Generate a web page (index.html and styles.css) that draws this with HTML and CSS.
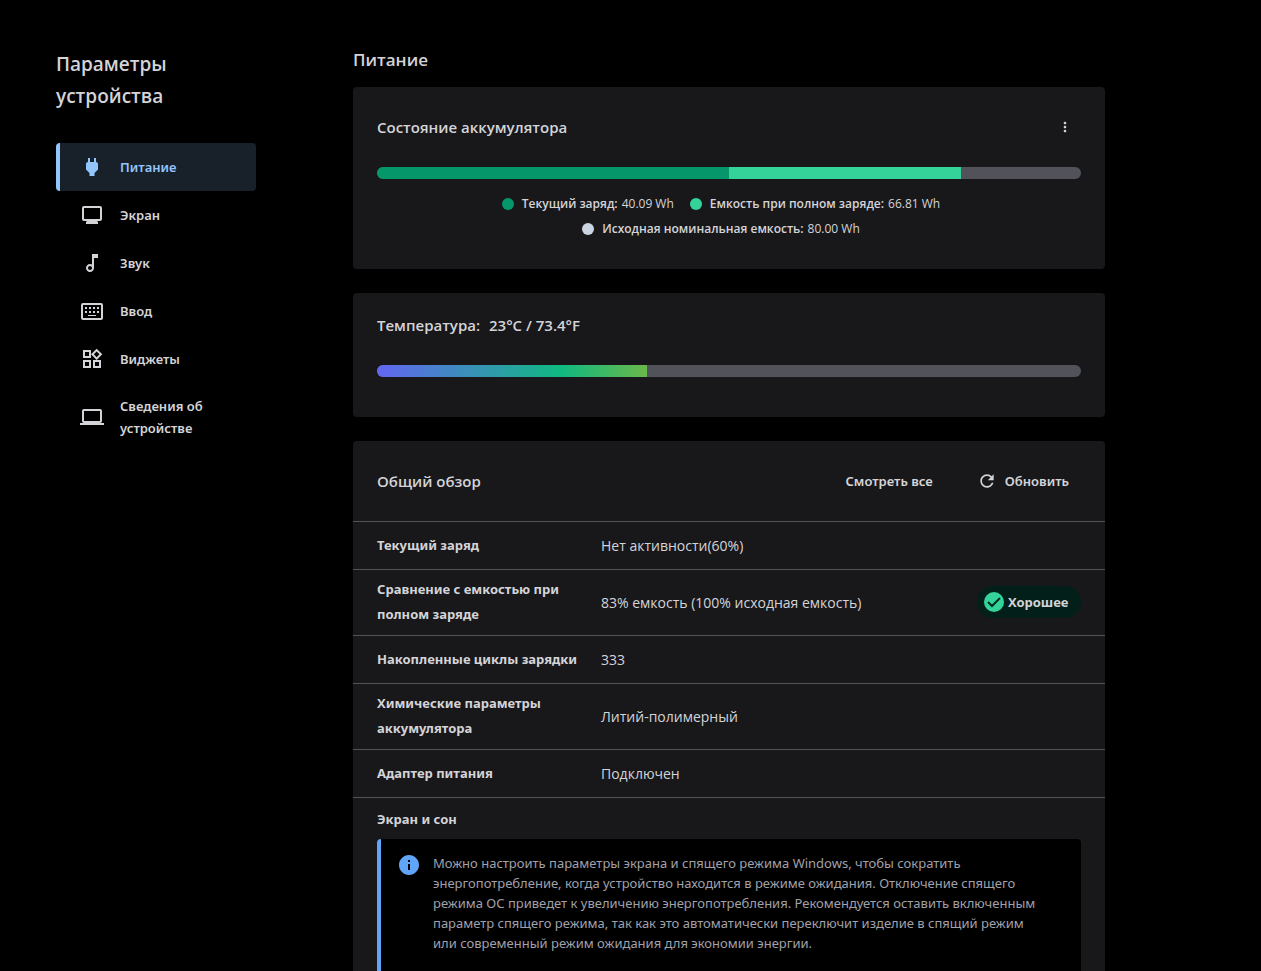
FILE: index.html
```html
<!DOCTYPE html>
<html lang="ru">
<head>
  <meta charset="UTF-8" />
  <meta name="viewport" content="width=device-width, initial-scale=1.0" />
  <title>Параметры устройства</title>
  <link rel="stylesheet" href="styles.css">
</head>
<body>
  <aside class="sidebar">
    <h1 class="sidebar-title">Параметры устройства</h1>
    <nav class="nav">
      <a class="nav-item active" href="#power">
        <svg class="icon" viewBox="0 0 24 24"><path d="M16.01 7L16 3h-2v4h-4V3H8v4h-.01C7 6.99 6 7.99 6 8.99v5.49L9.5 18v3h5v-3l3.5-3.51v-5.5c0-1-1-2-1.99-1.99z"/></svg>
        <span>Питание</span>
      </a>
      <a class="nav-item" href="#display">
        <svg class="icon" viewBox="0 0 24 24"><path d="M20 3H4c-1.1 0-2 .9-2 2v11c0 1.1.9 2 2 2h3l-1 1v2h12v-2l-1-1h3c1.1 0 2-.9 2-2V5c0-1.1-.9-2-2-2zm0 13H4V5h16v11z"/></svg>
        <span>Экран</span>
      </a>
      <a class="nav-item" href="#sound">
        <svg class="icon" viewBox="0 0 24 24"><path d="M12 3l.01 10.55c-.59-.34-1.27-.55-2-.55C7.79 13 6 14.79 6 17s1.79 4 4.01 4S14 19.21 14 17V7h4V3h-6zm-1.99 16c-1.1 0-2-.9-2-2s.9-2 2-2 2 .9 2 2-.9 2-2 2z"/></svg>
        <span>Звук</span>
      </a>
      <a class="nav-item" href="#input">
        <svg class="icon" viewBox="0 0 24 24"><path fill-rule="evenodd" d="M3 4h18a2 2 0 0 1 2 2v13a2 2 0 0 1-2 2H3a2 2 0 0 1-2-2V6a2 2 0 0 1 2-2zm0 2v13h18V6zM5 8h2v2H5zM9 8h2v2H9zM13 8h2v2h-2zM17 8h2v2h-2zM5 12h2v2H5zM9 12h2v2H9zM13 12h2v2h-2zM17 12h2v2h-2zM8 16h8v1H8z"/></svg>
        <span>Ввод</span>
      </a>
      <a class="nav-item" href="#widgets">
        <svg class="icon" viewBox="0 0 24 24"><path d="M16.66 4.52l2.83 2.83-2.83 2.83-2.83-2.83 2.83-2.83M9 5v4H5V5h4m10 10v4h-4v-4h4M9 15v4H5v-4h4m7.66-13.31L11 7.34 16.66 13l5.66-5.66-5.66-5.65zM11 3H3v8h8V3zm10 10h-8v8h8v-8zm-10 0H3v8h8v-8z"/></svg>
        <span>Виджеты</span>
      </a>
      <a class="nav-item" href="#about">
        <svg class="icon" viewBox="0 0 24 24"><path d="M20 18c1.1 0 1.99-.9 1.99-2L22 6c0-1.1-.9-2-2-2H4c-1.1 0-2 .9-2 2v10c0 1.1.9 2 2 2H0v2h24v-2h-4zM4 6h16v10H4V6z"/></svg>
        <span>Сведения об устройстве</span>
      </a>
    </nav>
  </aside>

  <main class="content">
    <h2 class="page-title">Питание</h2>

    <section class="card battery">
      <div class="card-head">
        <h3>Состояние аккумулятора</h3>
        <button class="icon-btn" type="button" aria-label="Меню">
          <svg viewBox="0 0 24 24"><path d="M12 8c1.1 0 2-.9 2-2s-.9-2-2-2-2 .9-2 2 .9 2 2 2zm0 2c-1.1 0-2 .9-2 2s.9 2 2 2 2-.9 2-2-.9-2-2-2zm0 6c-1.1 0-2 .9-2 2s.9 2 2 2 2-.9 2-2-.9-2-2-2z"/></svg>
        </button>
      </div>
      <div class="bar">
        <div class="bar-fill current" style="width: 50%"></div>
        <div class="bar-fill full" style="width: 33%"></div>
      </div>
      <ul class="legend">
        <li><span class="dot current"></span><strong>Текущий заряд:</strong> 40.09 Wh</li>
        <li><span class="dot full"></span><strong>Емкость при полном заряде:</strong> 66.81 Wh</li>
        <li><span class="dot design"></span><strong>Исходная номинальная емкость:</strong> 80.00 Wh</li>
      </ul>
    </section>

    <section class="card temperature">
      <h3><span>Температура:</span> <span>23°C / 73.4°F</span></h3>
      <div class="bar">
        <div class="bar-fill heat" style="width: 38.4%"></div>
      </div>
    </section>

    <section class="card overview">
      <div class="overview-head">
        <h3>Общий обзор</h3>
        <div class="actions">
          <button class="text-btn" type="button">Смотреть все</button>
          <button class="text-btn" type="button">
            <svg viewBox="0 0 24 24"><path d="M17.65 6.35C16.2 4.9 14.21 4 12 4c-4.42 0-7.99 3.58-7.99 8s3.57 8 7.99 8c3.73 0 6.84-2.55 7.73-6h-2.08c-.82 2.33-3.04 4-5.65 4-3.31 0-6-2.69-6-6s2.69-6 6-6c1.66 0 3.14.69 4.22 1.78L13 11h7V4l-2.35 2.35z"/></svg>
            Обновить
          </button>
        </div>
      </div>

      <table class="info">
        <tr><th scope="row">Текущий заряд</th><td colspan="2">Нет активности(60%)</td></tr>
        <tr>
          <th scope="row">Сравнение с емкостью при полном заряде</th>
          <td>83% емкость (100% исходная емкость)</td>
          <td class="status">
            <span class="badge">
              <svg viewBox="0 0 24 24"><circle cx="12" cy="12" r="10" fill="#34d399"/><path d="M6 12l4 4 8-8" fill="none" stroke="#022c22" stroke-width="2"/></svg>
              Хорошее
            </span>
          </td>
        </tr>
        <tr><th scope="row">Накопленные циклы зарядки</th><td colspan="2">333</td></tr>
        <tr><th scope="row">Химические параметры аккумулятора</th><td colspan="2">Литий-полимерный</td></tr>
        <tr><th scope="row">Адаптер питания</th><td colspan="2">Подключен</td></tr>
      </table>

      <div class="sleep">
        <h4>Экран и сон</h4>
        <div class="notice">
          <svg viewBox="0 0 24 24"><path d="M12 2C6.480 2 2 6.480 2 12s4.480 10 10 10 10-4.480 10-10S17.520 2 12 2zm1 15h-2v-6h2v6zm0-8h-2V7h2v2z"/></svg>
          <p>Можно настроить параметры экрана и спящего режима Windows, чтобы сократить энергопотребление, когда устройство находится в режиме ожидания. Отключение спящего режима ОС приведет к увеличению энергопотребления. Рекомендуется оставить включенным параметр спящего режима, так как это автоматически переключит изделие в спящий режим или современный режим ожидания для экономии энергии.</p>
        </div>
      </div>
    </section>
  </main>
</body>
</html>
```
FILE: styles.css
```css
* {
  box-sizing: border-box;
}

body {
  margin: 0;
  height: 100vh;
  overflow: hidden;
  padding: 48px 156px 0 56px;
  display: flex;
  align-items: flex-start;
  gap: 97px;
  background: #000;
  color: #d4d4d8;
  font-family: "Noto Sans", "Open Sans", sans-serif;
  font-size: 13px;
}

h1, h2, h3, h4, p, ul {
  margin: 0;
  padding: 0;
}

h1, h2, h3, strong {
  font-weight: 600;
}

h4, th {
  font-weight: 700;
}

h1, h2, h3, td, .legend {
  font-family: "Open Sans", "Noto Sans", sans-serif;
}

button {
  border: none;
  background: none;
  color: inherit;
  font: inherit;
  cursor: pointer;
}

svg {
  fill: currentColor;
  flex-shrink: 0;
}

/* sidebar */
.sidebar {
  width: 200px;
  flex-shrink: 0;
}

.sidebar-title {
  font-size: 19px;
  line-height: 32px;
  margin-bottom: 31px;
  padding-right: 40px;
}

.nav-item {
  display: flex;
  align-items: center;
  gap: 16px;
  padding: 12px 16px 12px 20px;
  min-height: 48px;
  border-left: 4px solid transparent;
  border-radius: 4px;
  color: inherit;
  font-weight: 600;
  line-height: 22px;
  text-decoration: none;
}

.nav-item.active {
  background: #182129;
  border-left-color: #93c5fd;
  color: #93c5fd;
}

.icon {
  width: 24px;
  height: 24px;
}

/* main */
.content {
  flex: 1;
  min-width: 0;
}

.page-title {
  font-size: 17px;
  line-height: 24px;
  margin-bottom: 15px;
}

.card {
  background: #18181b;
  border-radius: 4px;
  margin-bottom: 24px;
}

.card h3 {
  font-size: 15px;
  line-height: 24px;
}

.battery {
  padding: 24px 24px 28px;
}

.card-head {
  display: flex;
  align-items: center;
  justify-content: space-between;
  margin-bottom: 24px;
}

.icon-btn {
  display: flex;
  align-items: center;
  justify-content: center;
  width: 32px;
  height: 32px;
  padding: 0;
}

.icon-btn svg {
  width: 16px;
  height: 16px;
}

.bar {
  display: flex;
  height: 12px;
  border-radius: 6px;
  background: #52525b;
  overflow: hidden;
}

.current {
  background: #059669;
}

.full {
  background: #34d399;
}

.design {
  background: #cbd5e1;
}

.heat {
  background: linear-gradient(to right, #6366f1, #10b981 68%, #6ab84a);
}

.legend {
  display: flex;
  flex-wrap: wrap;
  justify-content: center;
  margin-top: 12px;
  list-style: none;
  font-size: 12px;
  line-height: 25px;
}

.legend li {
  display: flex;
  align-items: center;
  margin-right: 16px;
}

.legend strong {
  margin-right: 4px;
}

.dot {
  width: 12px;
  height: 12px;
  margin-right: 8px;
  border-radius: 50%;
}

.temperature {
  padding: 20px 24px 40px;
}

.temperature h3 {
  display: flex;
  gap: 9px;
  margin-bottom: 28px;
}

/* overview */
.overview-head {
  display: flex;
  align-items: center;
  justify-content: space-between;
  height: 80px;
  padding: 0 24px;
}

.actions {
  display: flex;
  gap: 20px;
}

.text-btn {
  display: flex;
  align-items: center;
  gap: 8px;
  height: 40px;
  padding: 0 12px;
  font-weight: 600;
}

.text-btn svg {
  width: 20px;
  height: 20px;
}

.info {
  width: 100%;
  border-spacing: 0;
  line-height: 25px;
}

.info th,
.info td {
  height: 48px;
  padding: 7px 0 8px;
  border-top: 1px solid #52525b;
  text-align: left;
}

.info th {
  width: 248px;
  padding-left: 24px;
  padding-right: 16px;
}

.info td {
  font-size: 14px;
}

.info .status {
  width: 128px;
  padding-right: 24px;
}

.badge {
  display: flex;
  align-items: center;
  gap: 2px;
  height: 32px;
  padding: 0 12px 0 5px;
  border-radius: 16px;
  background: #022019;
  font-family: "Noto Sans", "Open Sans", sans-serif;
  font-size: 13px;
  font-weight: 700;
}

.badge svg {
  width: 24px;
  height: 24px;
}

.sleep {
  padding: 9px 24px 24px;
  border-top: 1px solid #52525b;
}

.sleep h4 {
  font-size: 13px;
  line-height: 25px;
  margin-bottom: 7px;
}

.notice {
  display: flex;
  gap: 12px;
  padding: 14px 32px 24px 16px;
  border-left: 4px solid #60a5fa;
  border-radius: 4px;
  background: #000;
}

.notice svg {
  width: 24px;
  height: 24px;
  color: #60a5fa;
}

.notice p {
  color: #a1a1aa;
  line-height: 20px;
}
```
